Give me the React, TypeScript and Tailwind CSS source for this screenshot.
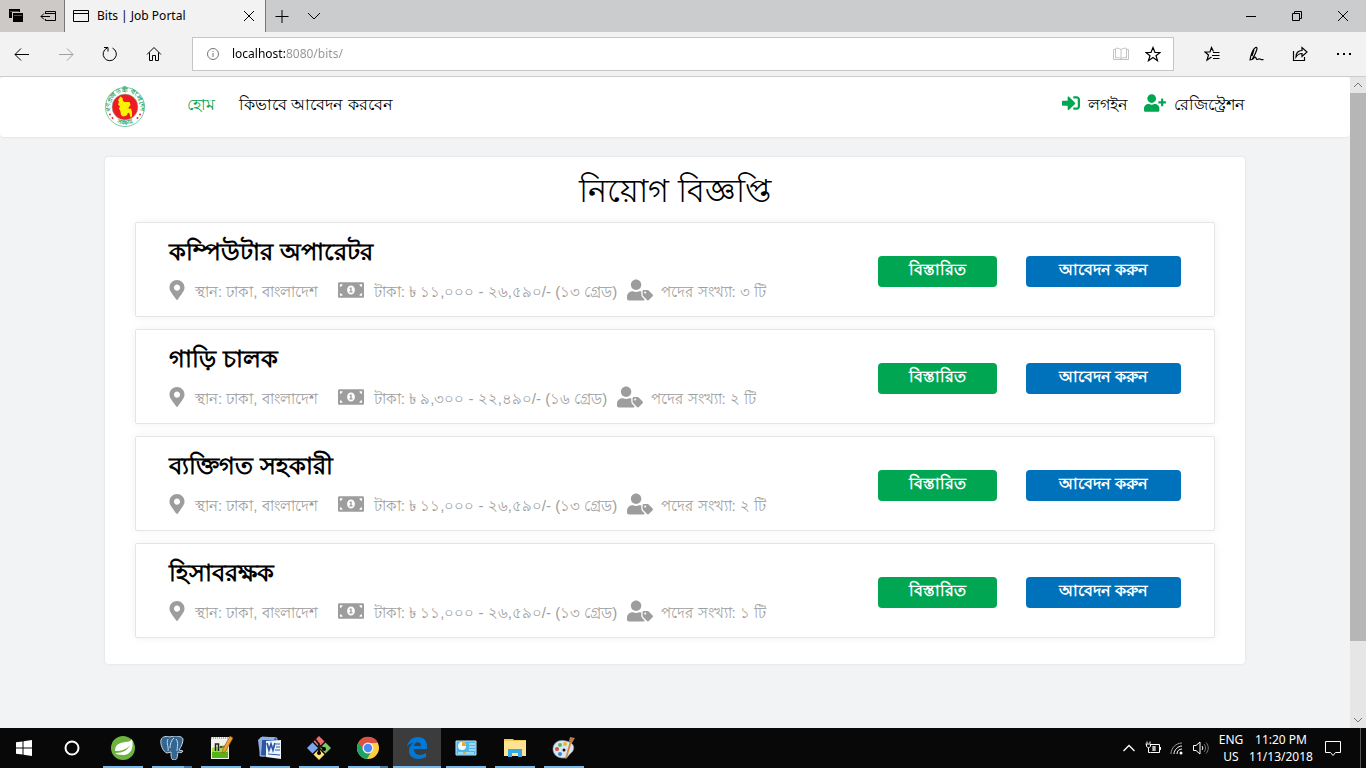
import type { ReactNode } from "react";
import { FaMapMarkerAlt, FaMoneyBillAlt, FaSignInAlt, FaUserPlus, FaUserTag } from "react-icons/fa";

type Job = { title: string; place: string; pay: string; posts: string };

const jobs: Job[] = [
  { title: "কম্পিউটার অপারেটর", place: "ঢাকা, বাংলাদেশ", pay: "৳ ১১,০০০ - ২৬,৫৯০/- (১৩ গ্রেড)", posts: "৩ টি" },
  { title: "গাড়ি চালক", place: "ঢাকা, বাংলাদেশ", pay: "৳ ৯,৩০০ - ২২,৪৯০/- (১৬ গ্রেড)", posts: "২ টি" },
  { title: "ব্যক্তিগত সহকারী", place: "ঢাকা, বাংলাদেশ", pay: "৳ ১১,০০০ - ২৬,৫৯০/- (১৩ গ্রেড)", posts: "২ টি" },
  { title: "হিসাবরক্ষক", place: "ঢাকা, বাংলাদেশ", pay: "৳ ১১,০০০ - ২৬,৫৯০/- (১৩ গ্রেড)", posts: "১ টি" },
];

function Line({ d, size = 16, width = 1, className = "" }: { d: string; size?: number; width?: number; className?: string }) {
  return (
    <svg width={size} height={size} viewBox={`0 0 ${size} ${size}`} fill="none" stroke="currentColor" strokeWidth={width} className={className} aria-hidden="true">
      <path d={d} />
    </svg>
  );
}

function IconButton({ label, className, children }: { label: string; className: string; children: ReactNode }) {
  return (
    <button type="button" aria-label={label} className={`flex shrink-0 items-center justify-center ${className}`}>
      {children}
    </button>
  );
}

function TitleBar() {
  return (
    <div className="flex h-8 shrink-0 bg-[#cbcccd]">
      <div className="flex w-16 shrink-0 bg-[#cdc9c7]">
        <IconButton label="Tabs set aside" className="w-8">
          <svg width="16" height="16" viewBox="0 0 16 16" aria-hidden="true">
            <path d="M1 1h11v3H4v6H1z" fill="#000" />
            <path d="M5 5h10v9H5z" fill="#000" />
            <path d="M2 3.500h9M6 7.500h8" stroke="#8a8786" strokeWidth=".6" />
          </svg>
        </IconButton>
        <IconButton label="Set these tabs aside" className="w-8">
          <Line d="M5.500 6V3.500h10v9h-10V11M5.500 5.500h10M1 8.500h9M4 5.500l-3 3 3 3" />
        </IconButton>
      </div>
      <div className="flex w-[202px] shrink-0 items-center border-x border-[#777] bg-[#f2f2f2] pl-2 pr-2">
        <Line d="M.5 2.500h15v11H.5zM.5 5.500h15" />
        <span className="ml-2 flex-1 text-xs">Bits | Job Portal</span>
        <IconButton label="Close tab" className="size-4">
          <Line d="M3 3l10 10M13 3L3 13" />
        </IconButton>
      </div>
      <IconButton label="New tab" className="w-8">
        <Line d="M8 2v13M1.500 8.500h13" />
      </IconButton>
      <IconButton label="Tab previews" className="w-8">
        <Line d="M2 5l6 6 6-6" />
      </IconButton>
      <div className="flex-1" />
      <IconButton label="Minimize" className="w-[46px]">
        <Line d="M3 8.500h10" />
      </IconButton>
      <IconButton label="Restore" className="w-[46px]">
        <Line d="M3.500 5.500h7v7h-7zM5.500 5.500v-2h7v7h-2" />
      </IconButton>
      <IconButton label="Close" className="w-[46px]">
        <Line d="M3 3l10 10M13 3L3 13" />
      </IconButton>
    </div>
  );
}

function ToolBar() {
  return (
    <div className="flex h-[45px] shrink-0 items-center border-b border-[#cccccc] bg-[#f2f2f2]">
      <IconButton label="Back" className="h-10 w-11">
        <Line d="M1 8.500h14M7 2.500l-6 6 6 6" />
      </IconButton>
      <IconButton label="Forward" className="h-10 w-11 text-[#a0a0a0]">
        <Line d="M1 8.500h14M9 2.500l6 6-6 6" />
      </IconButton>
      <IconButton label="Refresh" className="h-10 w-11">
        <Line d="M10.500 2.100A6.600 6.600 0 1 1 5 2.100M2 1.500h4v4" />
      </IconButton>
      <IconButton label="Home" className="h-10 w-11">
        <Line d="M1 8.500l7-7 7 7M3.500 6.500v8h3v-5h3v5h3v-8" />
      </IconButton>
      <div className="ml-4 flex h-[34px] flex-1 items-center border border-[#c6c6c6] bg-white px-3">
        <svg width="16" height="16" viewBox="0 0 16 16" fill="none" stroke="#767676" className="shrink-0" aria-hidden="true">
          <circle cx="8" cy="8" r="5.500" />
          <path d="M8 7v4M8 5v1" />
        </svg>
        <input
          aria-label="Address"
          defaultValue="localhost:8080/bits/"
          className="ml-[11px] min-w-0 flex-1 bg-[linear-gradient(to_right,#000_53px,#949494_53px)] bg-clip-text text-xs text-transparent outline-none"
        />
        <IconButton label="Reading view" className="w-8 text-[#c4c4c4]">
          <Line d="M8 3.500v9M8 3.500C6 2 3 2 2.500 2.500v9.500c2-.5 4-.5 5.500.5 1.500-1 3.500-1 5.500-.5V2.500C13 2 10 2 8 3.500M2 3.500H.5v10h15v-10H14" />
        </IconButton>
        <IconButton label="Add to favorites" className="-mr-2 w-8">
          <Line width={1.2} d="M8 1.500l2 5h5l-4 3.200 1.500 5L8 11.600l-4.500 3.100 1.500-5L1 6.500h5z" />
        </IconButton>
      </div>
      <div className="ml-4 flex">
        <IconButton label="Hub" className="h-10 w-11">
          <Line width={1.2} d="M9.500 5.500L7.500 1.500 6 6H1l3.500 3-1.500 5 4.500-3M9 6.500h6.500M8 9.500h7.500M9 12.500h6.500" />
        </IconButton>
        <IconButton label="Web note" className="h-10 w-11">
          <Line width={1.2} d="M2 14.500C2.500 10 4.500 3 7.500 1.500c1.500-.5 2 1 1 3C7.500 8 5.500 11 4 13.500L1.500 14M6 3.500L4 10M4.500 13.500c2-3 3-3 3.500-1.500s1 2 2.500 1 2.500 1.500 5 .5" />
        </IconButton>
        <IconButton label="Share" className="h-10 w-11">
          <Line width={1.2} d="M1.500 5v9.500h11V11M4 11c0-4 2-6.500 6-6.500v-3l5 4.500-5 4.500v-3C7 7.500 5.500 8.500 4 11z" />
        </IconButton>
        <IconButton label="More" className="h-10 w-11">
          <svg width="16" height="16" viewBox="0 0 16 16" aria-hidden="true">
            <path d="M1 7h2v2H1zM7 7h2v2H7zM13 7h2v2h-2z" />
          </svg>
        </IconButton>
      </div>
    </div>
  );
}

function Emblem() {
  return (
    <svg width="40" height="40" viewBox="0 0 80 80" className="overflow-visible" role="img" aria-label="গণপ্রজাতন্ত্রী বাংলাদেশ সরকার">
      <circle cx="40" cy="40" r="39" fill="#fff" stroke="#4dba8b" strokeWidth="1.500" />
      <circle cx="40" cy="40" r="26" fill="#ed1c24" stroke="#8fd3b5" strokeWidth="1" />
      <path id="ring-top" d="M14 54A29.500 29.500 0 1 1 66 54" fill="none" />
      <path id="ring-bottom" d="M20 69A35 35 0 0 0 60 69" fill="none" />
      <g fill="#1fa467" fontSize="12" fontWeight="700" textAnchor="middle">
        <text><textPath href="#ring-top" startOffset="50%">গণপ্রজাতন্ত্রী বাংলাদেশ</textPath></text>
        <text><textPath href="#ring-bottom" startOffset="50%">সরকার</textPath></text>
      </g>
      <path d="M31 19l4 3 1 6 3 2h10l2 6-4 5 1 3 4-1 2 7 0 9-3 2-2-8-3-2-2 5-3 2-5 1-4-3-1-7-3-6 2-4-4-4 2-5-2-4z" fill="#fff100" />
      <g fill="#e0303a">
        <circle cx="10" cy="55" r="2" /><circle cx="15" cy="62" r="2" />
        <circle cx="70" cy="55" r="2" /><circle cx="65" cy="62" r="2" />
      </g>
    </svg>
  );
}

function Navigation() {
  return (
    <nav className="h-[60px] shrink-0 rounded bg-white text-base shadow-[0_1px_2px_rgba(0,0,0,0.06)]">
      <div className="mx-auto flex h-full max-w-[1140px] items-center">
        <a href="#home" className="shrink-0"><Emblem /></a>
        <a href="#home" className="ml-[42px] pb-1 text-[#00a651]">হোম</a>
        <a href="#how" className="ml-6 pb-1">কিভাবে আবেদন করবেন</a>
        <a href="#login" className="ml-auto flex items-center gap-2 pb-1">
          <FaSignInAlt className="mb-1 text-lg text-[#00a651]" />লগইন
        </a>
        <a href="#register" className="ml-4 flex items-center gap-2 pb-1">
          <FaUserPlus className="mb-1 text-[22px] text-[#00a651]" />রেজিস্ট্রেশন
        </a>
      </div>
    </nav>
  );
}

function JobCard({ job }: { job: Job }) {
  return (
    <li className="flex h-[95px] items-center justify-between rounded-xs border border-[#e5e5e5] bg-white px-[33px] shadow-[0_0_10px_rgba(0,0,0,0.06)]">
      <div>
        <h2 className="text-2xl leading-8 font-bold">{job.title}</h2>
        <div className="mt-3 flex h-6 items-center text-[15px] leading-6 text-[#9d9d9d]">
          <FaMapMarkerAlt className="-ml-0.5 mr-2 mb-1 text-xl" />
          <span>স্থান: {job.place}</span>
          <FaMoneyBillAlt className="ml-5 mr-2.5 mb-1 text-[26px]" />
          <span>টাকা: {job.pay}</span>
          <FaUserTag className="ml-2.5 mr-2 mb-1 text-[26px]" />
          <span>পদের সংখ্যা: {job.posts}</span>
        </div>
      </div>
      <div className="flex gap-[29px] pt-1 text-base leading-6 font-bold text-white">
        <button type="button" className="h-[31px] w-[119px] rounded bg-[#00a651] pb-1">বিস্তারিত</button>
        <button type="button" className="h-[31px] w-[155px] rounded bg-[#0072bc] pb-1">আবেদন করুন</button>
      </div>
    </li>
  );
}

function ScrollBar() {
  return (
    <div className="flex w-4 shrink-0 flex-col bg-[#e6e6e6] text-[#777]" aria-hidden="true">
      <Line d="M4 10l4-4 4 4" />
      <div className="flex-[548] bg-[#b6b6b6]" />
      <div className="flex-[71]" />
      <Line d="M4 6l4 4 4-4" />
    </div>
  );
}

const apps: { name: string; active?: boolean; stacked?: boolean; icon: ReactNode }[] = [
  {
    name: "Spring Tool Suite",
    icon: <><circle cx="12" cy="12" r="12" fill="#6db33f" /><path d="M21 3c2 9-1 16-9 16-4 0-7-1-8-2 8 0 13-3 15-8-3 4-8 6-15 6C4 8 9 7 14 6c4 0 6-1 7-3z" fill="#fff" /></>,
  },
  {
    name: "pgAdmin", stacked: true,
    icon: <><path d="M1 4C2 0 7 0 10 1c5-2 12-1 13 2 0 4-2 8-4 11l4 1c-1 2-3 2-5 1-1 4 0 8-4 8-3 0-3-4-3-8l-4 1c-4-1-7-9-6-13z" fill="#336791" stroke="#c9d8e4" /><path d="M8 3c-2 5 1 8 0 12M16 3c3 4 1 8 1 12M10 12c0-3 1-8 4-10" stroke="#c9d8e4" fill="none" /></>,
  },
  {
    name: "Notepad++",
    icon: <><path d="M2 1h18v22H2z" fill="#f2f2ec" /><path d="M3 12l16-4v14H3z" fill="#a6dd4c" /><path d="M3 16h16v6H3z" fill="#55b516" /><path d="M2 2h18" stroke="#777" strokeDasharray="1" /><path d="M6.500 15V8h3v7M11 11h2.500M14.500 11H17" stroke="#222" strokeWidth="1.500" fill="none" /><path d="M21 0l3 2-8 14-3 1 1-4z" fill="#f0a32c" stroke="#8a4b1a" strokeWidth=".6" /></>,
  },
  {
    name: "Word",
    icon: <><path d="M4 1l15 1-1 18H2z" fill="#2c57a6" stroke="#8fb0e0" /><path d="M8 5l15-1v19l-15-2z" fill="#f0f5fb" /><path d="M0 4l3-3h14l-1 3H4l-1 15 5 2-6-1z" fill="#8fb0e0" /><path d="M9 7l2 7 2-6 2 6 2-7" stroke="#2c57a6" strokeWidth="1.800" fill="none" /><path d="M18 8h4M18 11h4M17 14h5M10 18l12 1" stroke="#2c57a6" /></>,
  },
  {
    name: "Git Bash",
    icon: <><path d="M12 0l5.500 5.500L12 11 6.500 5.500z" fill="#f06c6c" /><path d="M18.500 6.500L24 12l-5.500 5.500L13 12z" fill="#80c665" /><path d="M12 13l5.500 5.500L12 24l-5.500-5.500z" fill="#ffe36b" /><path d="M5.500 6.500L11 12l-5.500 5.500L0 12z" fill="#7aa7f0" /><path d="M8 3l4 5v9M12 9l5 4" stroke="#181818" strokeWidth="2" fill="none" /><circle cx="12" cy="17" r="2" /><circle cx="17" cy="13" r="2" /></>,
  },
  {
    name: "Chrome", stacked: true,
    icon: <><circle cx="12" cy="12" r="11" fill="#ffcd40" /><path d="M2.500 6.500A11 11 0 0 1 22 7H12L7 15z" fill="#dd5144" /><path d="M2.500 6.500A11 11 0 0 0 11 23l5-8.500-8 0z" fill="#1da462" /><circle cx="12" cy="12" r="5.500" fill="#f1f1f1" /><circle cx="12" cy="12" r="4.200" fill="#4c8bf5" /></>,
  },
  {
    name: "Edge", active: true,
    icon: <path d="M2 11C3 5 7 1 13 1c6 0 9 4 9 9v3H9c0 7 7 7 12 4v4c-7 4-17 2-17-6 0-4 2-7 5-8-4 0-6 2-7 4zM9 10h7c0-5-6-5-7 0z" fill="#0078d7" />,
  },
  {
    name: "Control Panel",
    icon: <><path d="M2 5h20v14H2z" fill="#4db8e8" stroke="#bde4f5" /><circle cx="8" cy="10" r="4" fill="#f4fbff" /><path d="M8 10V6a4 4 0 0 1 4 4z" fill="#f6a623" /><path d="M15 8h6M15 11h6M15 14h6M4 17h16" stroke="#e9f8ff" /><path d="M9 16h3v2H9z" fill="#f6a623" /></>,
  },
  {
    name: "File Explorer",
    icon: <><path d="M1 3h9l1 1h12v15H1z" fill="#f2c94f" /><path d="M1 5h22v15H1z" fill="#ffe292" /><path d="M5 13h14v8h-4v-4H9v4H5z" fill="#35a9e6" /></>,
  },
  {
    name: "Paint",
    icon: <><path d="M1 13C1 6 8 3 14 5c8 1 10 8 5 12-3 2-2 5-8 5C5 22 1 18 1 13z" fill="#d7e6f0" stroke="#91a9ba" strokeWidth=".6" /><circle cx="5" cy="13" r="2" fill="#df4b3f" /><circle cx="8" cy="9" r="2" fill="#59b94d" /><circle cx="13" cy="8" r="2" fill="#f3b530" /><circle cx="12" cy="14" r="1.500" fill="#111" /><circle cx="8" cy="18" r="2" fill="#3b86d8" /><path d="M20 5l-5 17-2 1 1-4 4-14z" fill="#d58a3c" /><path d="M18 1l5 1-3 5-3-2z" fill="#b57b50" /></>,
  },
];

function TaskBar() {
  return (
    <div className="flex h-10 shrink-0 bg-[#080808] text-white">
      <IconButton label="Start" className="w-12">
        <svg width="16" height="16" viewBox="0 0 16 16" fill="#fff" aria-hidden="true">
          <path d="M0 2.300L6.500 1.400v6.100H0zM7.500 1.200L16 0v7.500H7.500zM0 8.500h6.500v6.100L0 13.700zM7.500 8.500H16V16l-8.500-1.200z" />
        </svg>
      </IconButton>
      <IconButton label="Cortana" className="w-12">
        <svg width="16" height="16" viewBox="0 0 16 16" fill="none" stroke="#fff" strokeWidth="2" aria-hidden="true">
          <circle cx="8" cy="8" r="6.500" />
        </svg>
      </IconButton>
      <div className="ml-[3px] flex gap-px">
        {apps.map((app) => (
          <button key={app.name} type="button" aria-label={app.name} className={`flex w-12 flex-col items-center ${app.active ? "bg-[#3c3c3c]" : ""}`}>
            <span className="flex flex-1 items-center pt-0.5">
              <svg width="24" height="24" viewBox="0 0 24 24" aria-hidden="true">{app.icon}</svg>
            </span>
            <span className={`flex h-0.5 bg-[#76b9ed] ${app.active ? "w-12" : "w-10"}`}>
              {app.stacked && <span className="ml-auto w-2 bg-[#4b7ba0]" />}
            </span>
          </button>
        ))}
      </div>
      <div className="ml-auto flex items-center text-xs leading-[17px]">
        <IconButton label="Show hidden icons" className="w-6"><Line width={1.3} d="M2.500 11l5.500-5.500 5.500 5.500" /></IconButton>
        <IconButton label="Battery" className="w-6">
          <Line d="M5.500 4.500h9v8h-9M15.500 7v3M8 6v5M9 6v5M10 6v5M2 1.500v2M5 1.500v2M.5 4h5v2c0 2-4 2-4 0V4M3.500 8v4.500h2" />
        </IconButton>
        <IconButton label="Network" className="w-6">
          <svg width="16" height="16" viewBox="0 0 16 16" fill="none" stroke="#fff" aria-hidden="true">
            <path d="M2 14C2 8 7 3 13 3" stroke="#999" /><path d="M5 14c0-4 4-8 8-8M8 14c0-3 2-5 5-5" /><circle cx="12" cy="13" r="1.500" fill="#fff" stroke="none" />
          </svg>
        </IconButton>
        <IconButton label="Volume" className="w-6">
          <svg width="18" height="16" viewBox="0 0 18 16" fill="none" stroke="#fff" aria-hidden="true">
            <path d="M1.500 5.500h2.500l4-3.500v12l-4-3.500H1.500zM10 6c1 1 1 3 0 4" /><path d="M12 4c2 2 2 6 0 8M14 2.500c3 3 3 8 0 11" stroke="#777" />
          </svg>
        </IconButton>
        <button type="button" className="ml-0.5 w-8 text-center">ENG<br />US</button>
        <button type="button" className="ml-0.5 w-16 text-center">11:20 PM<br />11/13/2018</button>
        <IconButton label="Notifications" className="ml-1 w-8"><Line d="M.5 1.500h15v11h-5l-2.500 3-2.500-3h-5z" /></IconButton>
        <div className="ml-[11px] h-10 w-[6px] border-l border-[#555]" />
      </div>
    </div>
  );
}

export default function App() {
  return (
    <div className="flex h-screen flex-col overflow-hidden font-['Noto_Sans','Open_Sans',sans-serif] text-black">
      <TitleBar />
      <ToolBar />
      <div className="flex min-h-0 flex-1 bg-[#f1f3f5]">
        <div className="flex min-w-0 flex-1 flex-col overflow-hidden font-['Liberation_Sans','Noto_Sans',sans-serif]">
          <Navigation />
          <main className="mx-auto mt-5 w-full max-w-[1140px] rounded bg-white px-[30px] pt-2 pb-[26px] shadow-[0_0_3px_rgba(0,0,0,0.1)]">
            <h1 className="pb-1 text-center text-[32px] leading-[53px]">নিয়োগ বিজ্ঞপ্তি</h1>
            <ul className="flex flex-col gap-3">
              {jobs.map((job) => <JobCard key={job.title} job={job} />)}
            </ul>
          </main>
        </div>
        <ScrollBar />
      </div>
      <TaskBar />
    </div>
  );
}
